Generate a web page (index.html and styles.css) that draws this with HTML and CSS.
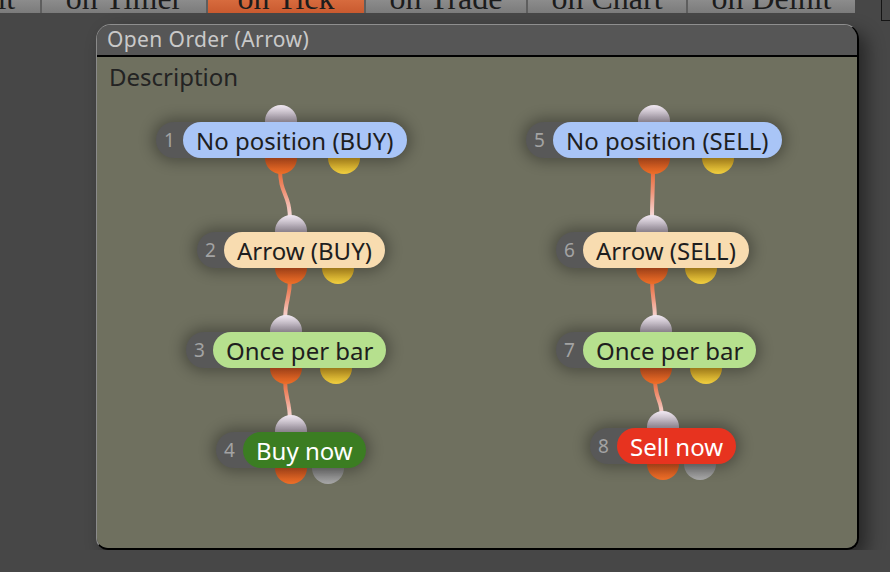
FILE: index.html
```html
<!DOCTYPE html>
<html lang="en">
<head>
    <meta charset="UTF-8">
    <title>Open Order (Arrow)</title>
    <link rel="stylesheet" href="styles.css">
</head>
<body>
    <div class="tabs">
        <div class="tab tab-init"><span>on Init</span></div>
        <div class="tab tab-timer"><span>on Timer</span></div>
        <div class="tab tab-tick active"><span>on Tick</span></div>
        <div class="tab tab-trade"><span>on Trade</span></div>
        <div class="tab tab-chart"><span>on Chart</span></div>
        <div class="tab tab-deinit"><span>on Deinit</span></div>
    </div>
    <div class="corner-box"></div>

    <div class="panel">
        <div class="panel-header">Open Order (Arrow)</div>
        <div class="panel-body">
            <div class="desc">Description</div>

            <!-- links between blocks -->
            <svg class="wires" width="760" height="487">
                <defs>
                    <linearGradient id="wire" x1="0" y1="0" x2="0" y2="1">
                        <stop offset="0" stop-color="#e8622a"/>
                        <stop offset="0.45" stop-color="#f0957a"/>
                        <stop offset="1" stop-color="#f8ecf2"/>
                    </linearGradient>
                </defs>
                <path d="M183,111 C183,140 193,134 193,165"/>
                <path d="M193,221 C193,245 188,240 188,266"/>
                <path d="M188,321 C188,345 193,340 193,366"/>
                <path d="M556,111 C556,140 555,134 555,165"/>
                <path d="M555,221 C555,245 558,240 558,266"/>
                <path d="M558,321 C558,345 565,340 565,362"/>
            </svg>

            <div class="node" style="left:59px;top:65px">
                <span class="port in"></span>
                <span class="num">1</span>
                <span class="label blue">No position (BUY)</span>
                <span class="port out"></span>
                <span class="port aux"></span>
            </div>
            <div class="node" style="left:100px;top:175px">
                <span class="port in"></span>
                <span class="num">2</span>
                <span class="label peach">Arrow (BUY)</span>
                <span class="port out"></span>
                <span class="port aux"></span>
            </div>
            <div class="node" style="left:89px;top:275px">
                <span class="port in"></span>
                <span class="num">3</span>
                <span class="label green">Once per bar</span>
                <span class="port out"></span>
                <span class="port aux"></span>
            </div>
            <div class="node" style="left:119px;top:375px">
                <span class="port in"></span>
                <span class="num">4</span>
                <span class="label buy">Buy now</span>
                <span class="port out"></span>
                <span class="port aux off"></span>
            </div>

            <div class="node" style="left:429px;top:65px">
                <span class="port in"></span>
                <span class="num">5</span>
                <span class="label blue">No position (SELL)</span>
                <span class="port out"></span>
                <span class="port aux"></span>
            </div>
            <div class="node" style="left:459px;top:175px">
                <span class="port in"></span>
                <span class="num">6</span>
                <span class="label peach">Arrow (SELL)</span>
                <span class="port out"></span>
                <span class="port aux"></span>
            </div>
            <div class="node" style="left:459px;top:275px">
                <span class="port in"></span>
                <span class="num">7</span>
                <span class="label green">Once per bar</span>
                <span class="port out"></span>
                <span class="port aux"></span>
            </div>
            <div class="node" style="left:493px;top:371px">
                <span class="port in"></span>
                <span class="num">8</span>
                <span class="label sell">Sell now</span>
                <span class="port out"></span>
                <span class="port aux off"></span>
            </div>
        </div>
    </div>
</body>
</html>
```

FILE: styles.css
```css
body {
    margin: 0;
    background-color: #474747;
    font-family: "Noto Sans", "Open Sans", sans-serif;
    overflow: hidden;
}

/* Tab strip (cut off at top) */
.tabs {
    display: flex;
    gap: 2px;
    width: 855px;
    height: 13px;
    overflow: hidden;
    background-color: #5e5e5e;
}
.tab {
    flex: none;
    height: 13px;
    overflow: hidden;
    background: linear-gradient(#8c8c8c, #7b7b7b);
    text-align: center;
}
.tab span {
    display: block;
    margin-top: -18px;
    font-family: "Liberation Serif", serif;
    font-size: 32px;
    line-height: 32px;
    color: #1c1c1c;
    white-space: nowrap;
}
.tab.active {
    background: linear-gradient(#d76b3e, #c95a2f);
}
.tab-init { width: 134px; margin-left: -94px; }
.tab-timer { width: 164px; }
.tab-tick { width: 156px; }
.tab-trade { width: 160px; }
.tab-chart { width: 158px; }
.tab-deinit { width: 167px; }

.corner-box {
    position: absolute;
    left: 881px;
    top: -1px;
    width: 20px;
    height: 20px;
    border: 1px solid #151515;
}

/* Block window */
.panel {
    box-sizing: border-box;
    width: 763px;
    height: 526px;
    margin: 11px 0 0 96px;
    display: flex;
    flex-direction: column;
    border-top: 1px solid #8e8e8e;
    border-left: 1px solid #8a8a8a;
    border-right: 2px solid #000;
    border-bottom: 2px solid #000;
    border-radius: 15px 15px 12px 12px;
    overflow: hidden;
    box-shadow: 8px 8px 18px rgba(0, 0, 0, 0.45);
}
.panel-header {
    flex: none;
    height: 32px;
    padding: 4px 10px 0;
    box-sizing: border-box;
    background-color: #565656;
    border-bottom: 2px solid #000;
    color: #c9c9c9;
    font-size: 21px;
    line-height: 21px;
    letter-spacing: 0.4px;
}
.panel-body {
    flex: 1;
    position: relative;
    z-index: 0;
    background-color: #6f705f;
}
.desc {
    padding: 8px 0 0 12px;
    font-size: 24px;
    line-height: 24px;
    color: #232323;
}

.wires {
    position: absolute;
    left: 0;
    top: 0;
    z-index: -2;
}
.wires path {
    fill: none;
    stroke: url(#wire);
    stroke-width: 4;
    stroke-linecap: round;
}

/* Nodes */
.node {
    position: absolute;
    display: flex;
    align-items: center;
    height: 36px;
    border-radius: 18px;
    background-color: #585858;
    box-shadow: 0 0 14px 4px rgba(0, 0, 0, 0.3);
}
.num {
    width: 27px;
    text-align: center;
    font-size: 19px;
    color: #a3a3a3;
}
.label {
    height: 36px;
    padding: 0 13px;
    border-radius: 18px;
    font-size: 24px;
    line-height: 37px;
    color: #1e1e1e;
    white-space: nowrap;
}
.label.blue { background-color: #a9c5f7; }
.label.peach { background-color: #f8dcb0; }
.label.green { background-color: #b6e08e; }
.label.buy { background-color: #3b7d22; color: #fff; }
.label.sell { background-color: #e7331f; color: #fff; }

.port {
    position: absolute;
    z-index: -1;
    width: 32px;
    height: 32px;
    border-radius: 50%;
    transform: translateX(-50%);
}
.port.in {
    left: 50%;
    top: -17px;
    background: linear-gradient(#f2eaf3, #b3a8b6 50%, #8c8290);
}
.port.out {
    left: 50%;
    top: 20px;
    background: linear-gradient(#a8401a, #c8521f 50%, #f07028);
}
.port.aux {
    left: 75%;
    top: 20px;
    background: linear-gradient(#a88418, #c99c22 50%, #f3d140);
}
.port.aux.off {
    background: linear-gradient(#6a6a6a, #7c7c7c 50%, #a9a9a9);
}
```
